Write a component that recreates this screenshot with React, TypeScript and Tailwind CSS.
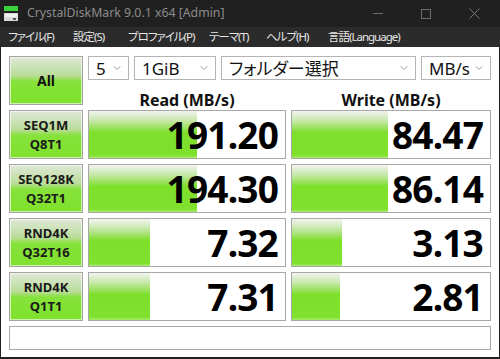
import { ChevronDown } from 'lucide-react'

interface Row {
  name: string
  sub: string
  read: string
  write: string
  readPct: number
  writePct: number
}

const rows: Row[] = [
  { name: 'SEQ1M', sub: 'Q8T1', read: '191.20', write: '84.47', readPct: 55, writePct: 48.5 },
  { name: 'SEQ128K', sub: 'Q32T1', read: '194.30', write: '86.14', readPct: 55, writePct: 48.5 },
  { name: 'RND4K', sub: 'Q32T16', read: '7.32', write: '3.13', readPct: 31, writePct: 25 },
  { name: 'RND4K', sub: 'Q1T1', read: '7.31', write: '2.81', readPct: 31, writePct: 24 },
]

// widths keep each menu item at its x in the window
const menus = [
  { label: 'ファイル(F)', w: 'w-[65px]' },
  { label: '設定(S)', w: 'w-[55px]' },
  { label: 'プロファイル(P)', w: 'w-[81px]' },
  { label: 'テーマ(T)', w: 'w-[57px]' },
  { label: 'ヘルプ(H)', w: 'w-[62px]' },
  { label: '言語(Language)', w: 'w-auto' },
]

const greenBtn =
  'border border-[#a3a3a3] bg-[linear-gradient(to_bottom,#dfe8d8_0%,#b9dc98_40%,#86e23a_52%,#7fe12d_100%)] shadow-[inset_0_0_0_1px_rgba(255,255,255,0.6)]'

function Select({ label, width }: { label: string; width: string }) {
  return (
    <div className={`${width} h-full flex items-center justify-between border border-[#b4b4b4] bg-white pl-[7px] pr-[5px]`}>
      <span className="text-[17px] text-[#111] leading-none [font-feature-settings:'palt']">{label}</span>
      <ChevronDown className="h-3 w-3 text-[#777]" strokeWidth={1.5} />
    </div>
  )
}

function ValueBox({ value, pct }: { value: string; pct: number }) {
  return (
    <div className="relative border border-[#a8a8a8] bg-white">
      <div
        className="absolute left-0 top-0 bottom-0 bg-[linear-gradient(to_bottom,#f2f4f0_0%,#c8e8ac_20%,#8fe04a_40%,#7fe02c_45%,#7fe12d_94%,#a8ec70_100%)]"
        style={{ width: `${pct}%` }}
      />
      <div className="relative h-full flex items-center justify-end pr-[7px] text-[37px] font-bold leading-none text-black tracking-[-0.8px]">
        {value}
      </div>
    </div>
  )
}

export default function App() {
  return (
    <div
      className="w-[500px] h-[359px] bg-[#202020] flex flex-col overflow-hidden"
      style={{ fontFamily: '"Noto Sans", "Noto Sans CJK JP", sans-serif' }}
    >
      {/* title bar */}
      <div className="h-[27px] flex items-center shrink-0">
        <svg width="16" height="18" viewBox="0 0 16 18" className="ml-[3px] mr-[8px]">
          <rect x="1" y="1" width="14" height="5" fill="#3ad13a" />
          <rect x="1" y="8" width="14" height="8" fill="#d8d8d8" />
          <rect x="2" y="9" width="12" height="3" fill="#f2f2f2" />
          <rect x="10" y="13" width="3" height="2" fill="#555" />
        </svg>
        <span className="text-[12.3px] text-[#8c8c8c]">CrystalDiskMark 9.0.1 x64 [Admin]</span>
        <div className="ml-auto flex items-center h-full pr-[2px]">
          <div className="w-[48px] flex justify-center">
            <div className="w-[10px] h-px bg-[#6e6e6e]" />
          </div>
          <div className="w-[48px] flex justify-center">
            <div className="w-[10px] h-[10px] border border-[#6e6e6e]" />
          </div>
          <div className="w-[48px] flex justify-center">
            <svg width="11" height="11" viewBox="0 0 11 11">
              <path d="M0.5 0.5L10.5 10.5M10.5 0.5L0.5 10.5" stroke="#7a7a7a" strokeWidth="1" />
            </svg>
          </div>
        </div>
      </div>

      {/* menu bar */}
      <div className="h-[20px] flex items-center bg-[#2b2b2b] shrink-0 pl-[8px]">
        {menus.map((m) => (
          <span
            key={m.label}
            className={`${m.w} shrink-0 whitespace-nowrap text-[11.5px] text-[#e6e6e6] leading-none [font-feature-settings:'palt'] tracking-[-1px]`}
          >
            {m.label}
          </span>
        ))}
      </div>

      {/* body */}
      <div className="flex-1 bg-white ml-[1px] mr-[1px] mb-[2px] pl-[8px] pr-[8px] pt-[9px]">
        <div className="grid grid-cols-[74px_198px_200px] grid-rows-[24px_20px_49px_49px_49px_49px] gap-[5px]">
          <div className={`${greenBtn} row-span-2 flex items-center justify-center`}>
            <span className="text-[14px] font-bold text-[#111]">All</span>
          </div>
          <div className="col-span-2 flex gap-[5px]">
            <Select label="5" width="w-[41px]" />
            <Select label="1GiB" width="w-[82px]" />
            <Select label="フォルダー選択" width="w-[195px]" />
            <Select label="MB/s" width="w-[70px]" />
          </div>
          <div className="flex items-end justify-center text-[16px] font-bold text-[#111] leading-none mb-[-3px]">
            Read (MB/s)
          </div>
          <div className="flex items-end justify-center text-[16px] font-bold text-[#111] leading-none mb-[-3px]">
            Write (MB/s)
          </div>
          {rows.map((r, i) => (
            <div key={i} className="contents">
              <div className={`${greenBtn} flex flex-col items-center justify-center gap-[6px]`}>
                <span className="text-[13px] font-bold text-[#1a1a1a] leading-none">{r.name}</span>
                <span className="text-[13px] font-bold text-[#1a1a1a] leading-none">{r.sub}</span>
              </div>
              <ValueBox value={r.read} pct={r.readPct} />
              <ValueBox value={r.write} pct={r.writePct} />
            </div>
          ))}
        </div>
        <div className="mt-[5px] h-[24px] border border-[#a8a8a8]" />
      </div>
    </div>
  )
}
